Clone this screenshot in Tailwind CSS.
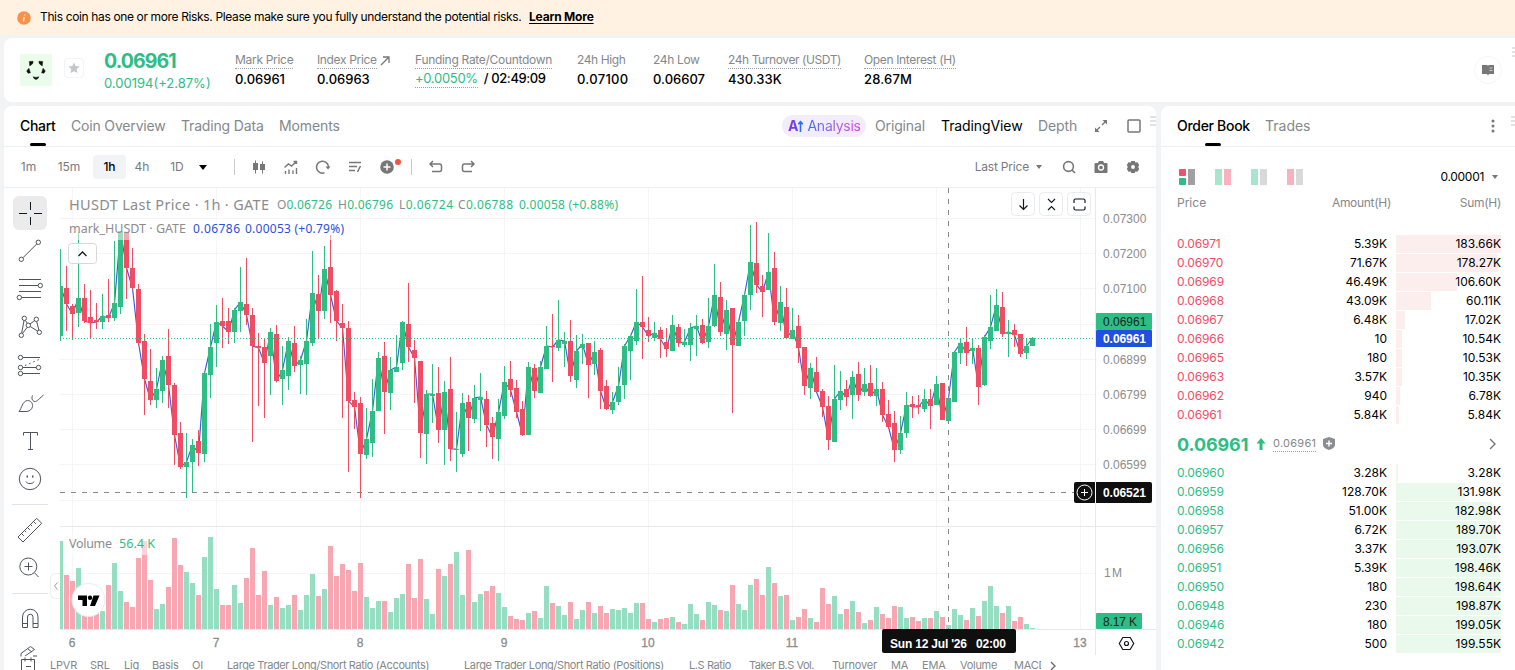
<!DOCTYPE html>
<html lang="en">
<head>
  <meta charset="UTF-8" />
  <meta name="viewport" content="width=device-width, initial-scale=1.0"/>
  <title>HUSDT 0.06961 - Futures</title>
  <script src="https://cdn.jsdelivr.net/npm/@tailwindcss/browser@4"></script>
</head>
<body class="w-[1515px] h-[670px] overflow-hidden bg-[#f2f3f5] font-['Inter','Liberation_Sans',sans-serif] text-black flex flex-col">

  <!-- Risk banner -->
  <div class="h-[35px] shrink-0 bg-[#fff2e2] flex items-center pl-[17px] text-xs">
    <svg class="w-[14px] h-[14px] mr-[9px]" viewBox="0 0 14 14"><circle cx="7" cy="7" r="6.8" fill="#fb9148"/><path d="M7.7 3.3v1.2M7.2 6l-.8 4.6" stroke="#ffe6d2" stroke-width="1.5" fill="none"/></svg>
    <span class="w-[489px] tracking-[-0.36px] whitespace-nowrap pb-px">This coin has one or more Risks. Please make sure you fully understand the potential risks.</span>
    <a class="font-bold underline underline-offset-2 tracking-[-0.2px] pb-px">Learn More</a>
  </div>

  <!-- Ticker header -->
  <header class="relative mt-[3px] ml-1 h-16 shrink-0 bg-white rounded-l-lg flex items-center pl-4">
    <div class="w-8 h-8 bg-[#e9fdea] flex items-center justify-center">
      <svg class="w-5 h-5" viewBox="0 0 20 20" fill="#111" stroke="#111" stroke-width=".5" stroke-linejoin="round"><path d="M3.300 1.500l3.800-.2-.3 2.200-3 2.500zM16.700 1.500l-3.800-.2.3 2.200 3 2.500zM.7 11l2.200-2.700 1.500 4.500-2.300.4zM19.300 11l-2.200-2.700-1.500 4.500 2.300.4zM7 16.800l3 .6 3-.6-1.300 1.900L10 19.500l-1.700-.8z"/></svg>
    </div>
    <div class="ml-3 w-5 h-5 -mt-1 border border-gray-100 rounded flex items-center justify-center">
      <svg class="w-3 h-3" viewBox="0 0 24 24" fill="#c4c7ca"><path d="M12 1l3.300 7.200 7.700.9-5.700 5.300 1.600 7.800L12 18.300l-6.900 3.900 1.600-7.800L1 9.100l7.700-.9z"/></svg>
    </div>
    <div class="ml-5 w-[131px] text-[#2ebd85] pt-0.5">
      <div class="text-[19.5px] leading-6 font-bold tracking-[-0.9px]">0.06961</div>
      <div class="text-[13px] leading-5 whitespace-nowrap">0.00194(+2.87%)</div>
    </div>
    <div class="flex text-xs text-[#84888c] whitespace-nowrap pt-px">
      <div class="w-[82px]">
        <span class="inline-block leading-4 border-b border-dotted border-gray-400 tracking-[-0.3px]">Mark Price</span>
        <div class="text-[13px] leading-5 text-black font-medium">0.06961</div>
      </div>
      <div class="w-[98px]">
        <span class="inline-block leading-4 border-b border-dotted border-gray-400 tracking-[-0.35px]">Index Price</span>
        <svg class="inline w-[10px] h-[10px]" viewBox="0 0 10 10" fill="none" stroke="#777" stroke-width="1.300"><path d="M1 9l8-8M3 1h6v6"/></svg>
        <div class="text-[13px] leading-5 text-black font-medium">0.06963</div>
      </div>
      <div class="w-[162px]">
        <span class="inline-block leading-4 border-b border-dotted border-gray-400 tracking-[-0.3px]">Funding Rate/Countdown</span>
        <div class="text-[13px] leading-[18px] text-black font-medium"><span class="inline-block border-b border-dotted border-gray-400 text-[#2ebd85] font-normal mr-1.5 tracking-[-0.3px]">+0.0050%</span><span class="tracking-[-0.4px]">/ 02:49:09</span></div>
      </div>
      <div class="w-[76px]">
        <span class="inline-block leading-4 border-b border-transparent tracking-[-0.4px]">24h High</span>
        <div class="text-[13px] leading-5 text-black font-medium tracking-[0.3px]">0.07100</div>
      </div>
      <div class="w-[75px]">
        <span class="inline-block leading-4 border-b border-transparent tracking-[-0.35px]">24h Low</span>
        <div class="text-[13px] leading-5 text-black font-medium">0.06607</div>
      </div>
      <div class="w-[136px]">
        <span class="inline-block leading-4 border-b border-dotted border-gray-400 tracking-[-0.42px]">24h Turnover (USDT)</span>
        <div class="text-[13px] leading-5 text-black font-medium">430.33K</div>
      </div>
      <div>
        <span class="inline-block leading-4 border-b border-dotted border-gray-400 tracking-[-0.35px]">Open Interest (H)</span>
        <div class="text-[13px] leading-5 text-black font-medium tracking-[0.2px]">28.67M</div>
      </div>
    </div>
    <div class="ml-auto mr-[13px] w-7 h-7 border border-[#f6f6f7] rounded-full flex items-center justify-center">
      <svg class="w-3 h-3" viewBox="0 0 12 12"><path d="M0 1h5l1 .7L7 1h5v9H7l-1 1.500L5 10H0z" fill="#777"/><path d="M7.500 4h3M7.500 6.500h3" stroke="#ddd" stroke-width=".8"/></svg>
    </div>
    <svg class="absolute right-0 top-[9px] w-[3px] h-[10px]" viewBox="0 0 3 10" stroke="#c4c6c9"><path d="M0 1h3M0 5h3M0 9h3"/></svg>
  </header>

  <div class="mt-1 grow min-h-0 flex">

    <!-- Chart panel -->
    <main class="relative ml-1 w-[1152px] shrink-0 bg-white rounded-t-lg overflow-hidden flex flex-col">
      <!-- Tabs -->
      <div class="h-[41px] shrink-0 border-b border-[#eeeff0] flex items-center text-sm text-[#84888c] whitespace-nowrap pl-4">
        <div class="relative w-[51px] h-full flex items-center text-black font-medium tracking-[-0.3px]">Chart<i class="absolute left-[10px] bottom-0 w-4 h-[3px] rounded-sm bg-black"></i></div>
        <div class="w-[110px] tracking-[-0.17px]">Coin Overview</div>
        <div class="w-[98px] tracking-[-0.17px]">Trading Data</div>
        <div class="tracking-[-0.1px]">Moments</div>
        <div class="ml-auto w-[84px] h-[22px] rounded-full bg-[#f1edfd] flex items-center pl-[6px]">
          <span class="font-bold bg-linear-to-r from-[#8e2be2] to-[#5a4cf0] bg-clip-text text-transparent">A</span>
          <svg class="w-[5px] h-3 mr-1" viewBox="0 0 5 12" fill="none" stroke="#2c6cf6" stroke-width="1.600"><path d="M2.500 12V3M.3 4.200l2.200-2.400 2.200 2.400"/></svg>
          <span class="bg-linear-to-r from-[#2c6cf6] to-[#e03ce0] bg-clip-text text-transparent tracking-[-0.25px]">Analysis</span>
        </div>
        <div class="ml-[9px] w-[66px] tracking-[-0.15px]">Original</div>
        <div class="w-[97px] text-black tracking-[-0.1px]">TradingView</div>
        <div class="w-[56px] tracking-[-0.1px]">Depth</div>
        <svg class="w-[14px] h-[14px]" viewBox="0 0 14 14" fill="#777" stroke="#777" stroke-width="1.400"><path d="M8 6l4-4M6 8l-4 4" fill="none"/><path stroke="none" d="M8.500 1H13v4.500zM5.500 13H1V8.500z"/></svg>
        <svg class="ml-[19px] mr-[15px] w-[14px] h-[14px]" viewBox="0 0 14 14" fill="none" stroke="#777" stroke-width="1.500"><rect x="1" y="1" width="12" height="12" rx="1"/></svg>
      </div>
      <svg class="absolute right-0 top-[10px] w-[6px] h-[10px]" viewBox="0 0 6 10" stroke="#c4c6c9"><path d="M0 1h6M0 5h6M0 9h6"/></svg>

      <!-- Toolbar -->
      <div class="h-[41px] shrink-0 border-b border-[#eeeff0] flex items-center text-xs text-[#777b80] whitespace-nowrap pl-1 text-center">
        <div class="w-[41px]">1m</div>
        <div class="w-10">15m</div>
        <div class="ml-1 w-[33px] h-6 leading-6 rounded bg-[#f2f3f4] text-black font-medium">1h</div>
        <div class="w-8">4h</div>
        <div class="w-[38px]">1D</div>
        <div class="w-[14px] flex justify-center"><svg class="w-2 h-[5px]" viewBox="0 0 8 5"><path d="M0 0h8L4 5z"/></svg></div>
        <div class="ml-6 w-px h-4 bg-[#c9cbce]"></div>
        <div class="ml-2 flex">
          <div class="w-8 flex justify-center"><svg class="w-4 h-4" viewBox="0 0 16 16" fill="#777" stroke="#777"><path d="M4.500 1.500v13M11.500 2.500v12"/><rect x="2.500" y="4.500" width="4" height="6"/><rect x="9.500" y="5.500" width="4" height="5"/></svg></div>
          <div class="w-8 flex justify-center"><svg class="w-4 h-4" viewBox="0 0 16 16" fill="none" stroke="#777" stroke-width="1.400"><path d="M1.500 8.500L5.500 5l3 2L13 3M10.500 2.500h3V5M2.500 12v3M6 10.500V15M10 11.500V15M13.500 9v6"/></svg></div>
          <div class="w-8 flex justify-center"><svg class="w-4 h-4" viewBox="0 0 16 16" fill="none" stroke="#777" stroke-width="1.500"><path d="M9.500 13.800A6 6 0 1 1 13.500 8"/><path d="M10.500 7.500h5L13 10.500z" fill="#777" stroke="none"/></svg></div>
          <div class="w-8 flex justify-center"><svg class="w-4 h-4" viewBox="0 0 16 16" fill="none" stroke="#777" stroke-width="1.500"><path d="M2 3.500h12M2 7.500h8M2 11.500h6M13.500 7l-3 6"/></svg></div>
          <div class="relative w-8 flex justify-center"><svg class="w-4 h-4" viewBox="0 0 16 16"><circle cx="8" cy="8" r="6.800" fill="#777"/><path d="M8 4.500v7M4.500 8h7" stroke="#fff" stroke-width="1.500"/></svg><i class="absolute right-0.5 top-0 w-[6px] h-[6px] rounded-full bg-[#f4533f]"></i></div>
        </div>
        <div class="ml-2 w-px h-4 bg-[#c9cbce]"></div>
        <div class="ml-2 flex">
          <div class="w-8 flex justify-center"><svg class="w-4 h-4" viewBox="0 0 16 16" fill="none" stroke="#777" stroke-width="1.500"><path d="M2 5h9.500a2 2 0 0 1 2 2v3.500a2 2 0 0 1-2 2H4M5 2L2 5l3 3"/></svg></div>
          <div class="w-8 flex justify-center"><svg class="w-4 h-4" viewBox="0 0 16 16" fill="none" stroke="#777" stroke-width="1.500"><path d="M14 5H4.500a2 2 0 0 0-2 2v3.500a2 2 0 0 0 2 2H12M11 2l3 3-3 3"/></svg></div>
        </div>
        <div class="ml-auto tracking-[-0.2px]">Last Price</div>
        <svg class="ml-[7px] w-[6px] h-1" viewBox="0 0 6 4" fill="#777"><path d="M0 0h6L3 4z"/></svg>
        <svg class="ml-5 w-[14px] h-[14px]" viewBox="0 0 14 14" fill="none" stroke="#777" stroke-width="1.600"><circle cx="6.500" cy="6.500" r="4.900"/><path d="M10 10l3 3"/></svg>
        <svg class="ml-[18px] w-[14px] h-[14px]" viewBox="0 0 14 14"><path d="M1.500 3h2.300L5 1h4l1.200 2h2.300q1 0 1 1v8q0 1-1 1h-11q-1 0-1-1V4q0-1 1-1z" fill="#777"/><circle cx="7" cy="7.500" r="2.500" fill="none" stroke="#fff" stroke-width="1.300"/></svg>
        <svg class="ml-[18px] mr-4 w-[14px] h-[14px]" viewBox="0 0 14 14"><path d="M5.300 1h3.400l.6 1.500 2.200-.3 1.700 2.900L12.200 7l1 1.900-1.700 2.900-2.200-.3L8.700 13H5.300l-.6-1.500-2.200.3L.8 8.900l1-1.900-1-1.900 1.700-2.900 2.200.3z" fill="#777"/><circle cx="7" cy="7" r="1.900" fill="#fff"/></svg>
      </div>

      <div class="h-[467px] shrink-0 flex">
        <!-- Drawing tools -->
        <div class="relative w-14 shrink-0 pt-[6px] pl-2">
          <div class="w-9 h-[38px] flex items-center justify-center">
            <div class="w-[34px] h-[34px] shrink-0 rounded-md bg-[#ebebeb] flex items-center justify-center">
              <svg class="w-7 h-7" viewBox="0 0 28 28" stroke="#131722"><path d="M14.500 3v8M14.500 18v8M3 14.500h8M18 14.500h8"/></svg>
            </div>
          </div>
          <div class="w-9 flex flex-col text-[#50535e]">
            <svg class="w-7 h-7 m-[5px] ml-1" viewBox="0 0 28 28" fill="none" stroke="currentColor"><circle cx="5.300" cy="22.300" r="2.200"/><circle cx="22.300" cy="5.300" r="2.200"/><path d="M7 20.700L20.700 7"/></svg>
            <svg class="w-7 h-7 m-[5px] ml-1" viewBox="0 0 28 28" fill="none" stroke="currentColor"><path d="M3 4.500h22M3 10.500h19M3 16.500h22M5.500 22.500H25"/><circle cx="24.300" cy="10.500" r="2.200"/><circle cx="3.300" cy="22.500" r="2.200"/></svg>
            <svg class="w-7 h-7 m-[5px] ml-1" viewBox="0 0 28 28" fill="none" stroke="currentColor"><circle cx="5.300" cy="22.300" r="2.200"/><circle cx="8.300" cy="5.300" r="2.200"/><circle cx="12.300" cy="12.300" r="2.200"/><circle cx="20.300" cy="6.300" r="2.200"/><circle cx="23.300" cy="19.300" r="2.200"/><path d="M5.700 20L8 7.500M9.200 7.300l2.200 3M6.500 20.500l4.700-6.200M14 11l4.700-3.500M20.700 8.500l2.200 8.700M14.200 13.500l7.300 4.500"/></svg>
            <svg class="w-7 h-7 m-[5px] ml-1" viewBox="0 0 28 28" fill="none" stroke="currentColor"><circle cx="4.500" cy="6.500" r="2.200"/><path d="M6.700 6.500H24"/><circle cx="4.500" cy="16.500" r="2.200"/><circle cx="22.500" cy="16.500" r="2.200"/><path d="M6.700 16.500h13.600"/><circle cx="4.500" cy="22.500" r="2.200"/><path d="M6.700 22.500H24"/><path stroke-dasharray="1.500 3" d="M9 14.500l14-6"/></svg>
            <svg class="w-7 h-7 m-[5px] ml-1" viewBox="0 0 28 28" fill="none" stroke="currentColor"><path d="M3 22.500C6 19 6 12.500 11.500 11.500c3.500 0 5.500 3 5 6-.7 3.500-3.500 5-6.500 5zM16.500 6.500c-1.500 3.500.5 6 2.500 6 1.500 0 2.500-1 8.500-6.500"/></svg>
            <svg class="w-7 h-7 m-[5px] ml-1" viewBox="0 0 28 28" fill="none" stroke="currentColor"><path d="M7.500 8.500v-3h14v3M14.500 5.500v17M12 22.500h5"/></svg>
            <svg class="w-7 h-7 m-[5px] ml-1" viewBox="0 0 28 28" fill="none" stroke="currentColor"><circle cx="14" cy="14" r="10.700"/><path d="M10 16.500c1 2.800 7 2.800 8 0"/><path stroke-width="2" d="M10.500 11.500h1.500M16 11.500h1.500"/></svg>
            <div class="h-[13px] pt-[6px]"><div class="h-px bg-[#e0e3eb]"></div></div>
            <svg class="w-7 h-7 m-[5px] ml-1" viewBox="0 0 28 28" fill="none" stroke="currentColor"><path d="M20.700 2.300l5 5L7 26l-5-5zM5.500 17.500l2.300 2.300M8.500 14.500l1.600 1.600M11.500 11.500l2.300 2.300M14.500 8.500l1.600 1.600M17.500 5.500l2.300 2.300"/></svg>
            <svg class="w-7 h-7 m-[5px] ml-1" viewBox="0 0 28 28" fill="none" stroke="currentColor"><circle cx="12.300" cy="12.500" r="8.500"/><path d="M18.500 18.700L22.500 23M8.500 12.500h8M12.500 8.500v8"/></svg>
            <div class="h-[13px] pt-[6px]"><div class="h-px bg-[#e0e3eb]"></div></div>
            <svg class="w-7 h-7 m-[5px] ml-1" viewBox="0 0 28 28" fill="none" stroke="currentColor"><path d="M6.500 22.500V12a7.700 7.700 0 0 1 15.500 0v10.500h-5V12a2.700 2.700 0 0 0-5.500 0v10.500zM6.500 18.500h5M17 18.500h5"/></svg>
            <svg class="w-7 h-7 m-[5px] ml-1 shrink-0" viewBox="0 0 28 28" fill="none" stroke="currentColor"><path d="M5 13.500v-3L14.500 3.500l4 3L9 13M12 6l4 3M17 13h4M5.500 28V16.500h13V28M9 14.500v4M15 14.500v4M10 23.500h5"/></svg>
          </div>
          <div class="absolute right-0 bottom-14 w-[10px] h-[26px] border border-r-0 border-[#eceef0] rounded-l-md bg-white flex items-center justify-center">
            <svg class="w-1 h-2" viewBox="0 0 4 8" fill="none" stroke="#9a9da3"><path d="M3.500.5L.5 4l3 3.500"/></svg>
          </div>
        </div>

        <!-- Price and volume chart -->
        <svg id="chart" class="w-[1096px] h-[467px] shrink-0" viewBox="60 188 1096 467">
          <g id="grid" stroke="#f5f5f6"></g>
          <g id="volume"></g>
          <polyline id="mark" fill="none" stroke="#3f5fe0" stroke-width="1.200"></polyline>
          <g id="candles"></g>
          <path d="M60 338.500H1096" stroke="#2ebd85" stroke-dasharray="1 2"/>
          <path d="M60 526.500H1156M60 629.500H1156M1095.500 188V655" stroke="#e6e8ea"/>
          <path d="M60 492.500H1074" stroke="#888" stroke-dasharray="5 6"/>
          <path d="M948.500 188V629" stroke="#888" stroke-dasharray="5 6"/>

          <!-- Legend -->
          <rect x="66" y="220" width="282" height="20" fill="#fff" fill-opacity=".5"/>
          <rect x="66" y="534" width="92" height="21" fill="#fff" fill-opacity=".5"/>
          <g class="font-['Noto_Sans',sans-serif]" fill="#8c8c8c">
            <text x="69" y="210" font-size="14.500" textLength="200">HUSDT Last Price · 1h · GATE</text>
            <g font-size="12" fill="#2ebd85">
              <text x="277" y="209" textLength="55"><tspan fill="#8c8c8c">O</tspan>0.06726</text>
              <text x="338" y="209" textLength="55"><tspan fill="#8c8c8c">H</tspan>0.06796</text>
              <text x="399" y="209" textLength="54"><tspan fill="#8c8c8c">L</tspan>0.06724</text>
              <text x="458" y="209" textLength="55"><tspan fill="#8c8c8c">C</tspan>0.06788</text>
              <text x="519" y="209" textLength="99">0.00058 (+0.88%)</text>
            </g>
            <text x="69" y="233" font-size="12.500" textLength="117">mark_HUSDT · GATE</text>
            <text x="193" y="233" font-size="12" fill="#2c50d8" textLength="47">0.06786</text>
            <text x="245" y="233" font-size="12" fill="#2c50d8" textLength="99">0.00053 (+0.79%)</text>
            <text x="69" y="548" font-size="12.500" textLength="43">Volume</text>
            <text x="119" y="548" font-size="12.500" fill="#2ebd85" textLength="36">56.4 K</text>
          </g>
          <rect x="68.500" y="243.500" width="28" height="20" rx="3" fill="#fff" fill-opacity=".85" stroke="#d6d8dc"/>
          <path d="M78.500 256l4-4 4 4" fill="none" stroke="#131722" stroke-width="1.300"/>

          <!-- Pane buttons -->
          <g fill="#fff" stroke="#eaebee"><rect x="1011.500" y="192.500" width="23" height="23" rx="4"/><rect x="1039.500" y="192.500" width="23" height="23" rx="4"/><rect x="1067.500" y="192.500" width="23" height="23" rx="4"/></g>
          <g fill="none" stroke="#131722" stroke-width="1.200"><path d="M1023.500 199v10.500M1019.500 205.500l4 4 4-4"/><path stroke-width="1.100" d="M1048 199l3.500 3.500 3.500-3.500M1048 210l3.500-3.500 3.500 3.500"/><path d="M1074 203v-2.500q0-1.500 1.500-1.500h8q1.500 0 1.500 1.500v2.500M1074 206.500v2q0 1.500 1.500 1.500h8q1.500 0 1.500-1.500v-2"/></g>

          <!-- Logo -->
          <circle cx="88.500" cy="600" r="16.500" fill="#fff" stroke="#ececee"/>
          <path d="M78 595.500h9v10.500h-4.500v-6H78zM93.500 595.500h6L95 606h-5z" fill="#000"/><circle cx="90" cy="597.700" r="2.200"/>

          <!-- Axis labels -->
          <g id="prices" class="font-['Liberation_Sans',sans-serif]" font-size="12" fill="#8c8c8c"></g>
          <g class="font-['Liberation_Sans',sans-serif]" font-size="12">
            <rect x="1096" y="313" width="56" height="17" rx="1" fill="#2ebd85"/><text x="1103" y="326" fill="#10281f">0.06961</text>
            <rect x="1096" y="330" width="56" height="17" rx="1" fill="#2150e0"/><text x="1103" y="343" fill="#fff" font-weight="bold" textLength="43">0.06961</text>
            <rect x="1074" y="482" width="78" height="21" rx="2" fill="#0f0f0f"/><path d="M1095.500 482v21" stroke="#fff"/>
            <circle cx="1084.500" cy="492.500" r="7.500" fill="none" stroke="#fff"/><path d="M1084.500 489v7M1081 492.500h7" stroke="#fff"/>
            <text x="1103" y="497" fill="#fff" font-weight="bold" textLength="43">0.06521</text>
            <rect x="1096" y="613" width="46" height="16" rx="1" fill="#2ebd85"/><text x="1103" y="626" fill="#10281f" textLength="34">8.17 K</text>
            <text x="1104" y="577" fill="#8c8c8c" textLength="18">1 M</text>
            <rect x="882" y="629" width="134" height="24" rx="2" fill="#0f0f0f"/>
            <text x="890" y="648" fill="#fff" font-weight="bold" textLength="77">Sun 12 Jul '26</text><text x="976" y="648" fill="#fff" font-weight="bold" textLength="30">02:00</text>
          </g>
          <g fill="none" stroke="#131722" stroke-width="1.200"><path d="M1122.800 637.500h7.400l3.500 6-3.500 6h-7.400l-3.500-6z"/><circle cx="1126.500" cy="643.500" r="2"/></g>
        </svg>
      </div>

      <!-- Indicator shortcuts -->
      <div class="h-[21px] shrink-0 pl-[46px] flex items-center text-[11px] text-[#84888c] tracking-[-0.2px] whitespace-nowrap">
        <span class="w-10">LPVR</span><span class="w-[34px]">SRL</span><span class="w-[28px]">Liq</span><span class="w-10">Basis</span><span class="w-[35px]">OI</span>
        <span class="w-[237px] tracking-[-0.38px]">Large Trader Long/Short Ratio (Accounts)</span><span class="w-[225px] tracking-[-0.38px]">Large Trader Long/Short Ratio (Positions)</span>
        <span class="w-[60px] tracking-[-0.4px]">L.S Ratio</span><span class="w-[83px] tracking-[-0.5px]">Taker B.S Vol.</span><span class="w-[59px]">Turnover</span><span class="w-[31px]">MA</span><span class="w-[38px]">EMA</span><span class="w-[54px] tracking-[-0.3px]">Volume</span><span class="w-[27px] overflow-hidden">MACD</span>
        <svg class="ml-[9px] w-[6px] h-[10px]" viewBox="0 0 6 10" fill="none" stroke="#666" stroke-width="1.300"><path d="M1 1l4 4-4 4"/></svg>
      </div>
    </main>

    <!-- Order book -->
    <aside class="relative ml-[5px] grow bg-white rounded-tl-lg text-xs pr-[14px] flex flex-col">
      <div class="-mr-[14px] h-[41px] shrink-0 border-b border-[#eeeff0] pl-4 pr-5 flex items-center text-sm">
        <div class="relative w-[88px] h-full flex items-center font-medium tracking-[-0.3px] whitespace-nowrap">Order Book<i class="absolute left-7 bottom-0 w-4 h-[3px] rounded-sm bg-black"></i></div>
        <div class="text-[#84888c]">Trades</div>
        <svg class="ml-auto w-1 h-[14px]" viewBox="0 0 4 14" fill="#777"><circle cx="2" cy="2" r="1.500"/><circle cx="2" cy="7" r="1.500"/><circle cx="2" cy="12" r="1.500"/></svg>
      </div>
      <svg class="absolute right-0 top-[10px] w-1 h-[10px]" viewBox="0 0 4 10" stroke="#c4c6c9"><path d="M0 1h4M0 5h4M0 9h4"/></svg>

      <div class="mt-[21px] pl-[18px] h-[18px] flex items-center gap-5">
        <svg class="w-4 h-4" viewBox="0 0 16 16"><rect width="7" height="7" rx="1" fill="#f0506a"/><rect y="9" width="7" height="7" rx="1" fill="#2ebd85"/><rect x="9" width="7" height="16" fill="#a0a0a0"/></svg>
        <svg class="w-4 h-4" viewBox="0 0 16 16"><rect width="7" height="16" fill="#a9e4cc"/><rect x="9" width="7" height="16" fill="#f9b0bf"/></svg>
        <svg class="w-4 h-4" viewBox="0 0 16 16"><rect width="7" height="16" fill="#a9e4cc"/><rect x="9" width="7" height="16" fill="#d9d9d9"/></svg>
        <svg class="w-4 h-4" viewBox="0 0 16 16"><rect width="7" height="16" fill="#f9b0bf"/><rect x="9" width="7" height="16" fill="#d9d9d9"/></svg>
        <span class="ml-auto flex items-center gap-2 pr-[3px]"><span class="tracking-[-0.3px]">0.00001</span><svg class="w-[6px] h-1" viewBox="0 0 6 4" fill="#777"><path d="M0 0h6L3 4z"/></svg></span>
      </div>
      <div class="mt-2 pl-4 flex h-[18px] items-center text-[#84888c] tracking-[-0.3px]">
        <span class="tracking-normal">Price</span><span class="ml-auto">Amount(H)</span><span class="w-[110px] text-right">Sum(H)</span>
      </div>
      <div id="asks" class="mt-[22px] shrink-0"></div>
      <div class="pl-4 h-[39px] shrink-0 flex items-center">
        <span class="text-lg font-bold tracking-[-0.1px] text-[#2ebd85] w-[79px] pt-0.5">0.06961</span>
        <svg class="w-[10px] h-3" viewBox="0 0 10 12" fill="#2ebd85"><path d="M5 0l4.500 5.500h-3V12h-3V5.500h-3z"/></svg>
        <span class="ml-[7px] text-[11px] leading-4 tracking-[0.25px] text-[#84888c] border-b border-dotted border-gray-400">0.06961</span>
        <svg class="ml-[7px] w-3 h-[13px]" viewBox="0 0 12 13"><path d="M6 0l6 2v6q0 3-6 5-6-2-6-5V2z" fill="#8a8d91"/><path d="M6 3.500v6M3 6.500h6" stroke="#fff" stroke-width="1.500"/></svg>
        <svg class="ml-auto mr-[5px] w-[7px] h-3" viewBox="0 0 7 12" fill="none" stroke="#777" stroke-width="1.400"><path d="M1 1l5 5-5 5"/></svg>
      </div>
      <div id="bids" class="shrink-0"></div>
    </aside>
  </div>

  <script>
    // Each candle: side, high, body top, body bottom, low, volume height
    const candles = `g249,286,336,341,88 r266,288,304,331,54 r304,306,314,340,48 g232,298,313,327,61 r284,298,321,323,30 r290,317,323,338,28
      r303,320,322,329,30 g294,316,322,329,18 r279,315,318,322,44 g241,303,318,321,66 g231,231,307,314,38 r232,232,268,299,27
      r248,268,288,290,22 r284,289,343,345,71 r334,341,379,415,88 r349,381,400,405,49 g368,389,400,408,20 g356,360,391,403,25
      r329,356,385,408,42 r383,385,435,465,91 r422,433,467,469,64 g433,462,467,498,57 g439,445,462,493,46 r430,441,453,466,34
      g371,373,454,462,72 g324,347,375,398,92 g305,322,343,367,40 r298,321,326,348,24 r308,321,332,344,24 g308,310,332,343,44
      g267,302,311,332,26 r258,304,315,325,51 r308,315,346,442,81 r333,346,348,406,34 r339,347,363,418,58 g328,332,356,395,24
      r325,334,381,382,32 g346,370,379,405,21 g337,341,376,390,24 r326,343,366,372,34 g356,360,365,394,19 g319,341,364,395,34
      g251,293,343,346,55 r275,294,311,338,33 g246,269,311,319,40 r235,267,295,323,83 r290,291,321,341,53 r304,323,328,418,65
      r321,328,401,472,59 r392,400,407,429,38 r397,403,454,498,66 g408,439,455,459,32 g379,411,443,457,21 g352,358,411,411,28
      r342,356,392,434,28 g357,370,393,410,17 g335,367,372,372,31 g321,322,363,370,35 r283,324,347,362,65 r340,350,358,403,31
      r361,361,433,458,70 g390,394,434,464,30 g364,394,396,423,15 r367,393,430,443,60 g381,392,430,465,53 r357,389,449,461,65
      g412,449,450,472,77 g393,403,454,457,34 r395,402,418,451,79 g385,398,419,423,27 g373,397,400,431,35 r391,399,425,447,38
      r417,423,437,459,43 g399,412,439,461,36 g366,382,416,419,22 r361,379,390,397,13 r380,388,412,418,10 r401,409,435,436,9
      g362,367,435,435,16 r364,368,391,398,18 g361,367,393,393,11 g326,346,369,369,43 r314,346,347,382,26 g300,340,348,351,23
      g332,341,344,367,14 r320,341,376,382,27 g335,351,380,388,10 g334,344,348,364,19 r343,343,365,398,27 g341,352,364,375,16
      r348,350,391,409,23 r380,386,409,410,16 g392,402,410,414,20 g367,386,402,405,19 g344,346,385,399,21 g335,336,351,380,16
      g289,322,341,345,26 r276,322,327,359,26 r317,330,336,342,10 g322,333,338,341,7 r327,330,339,358,10 r328,342,349,357,11
      g315,325,351,351,12 r324,327,343,347,7 g329,342,345,347,5 g323,328,345,361,25 g315,326,329,356,15 r319,325,343,343,9
      g298,326,342,348,27 g264,295,326,327,24 r282,297,332,336,19 g300,310,334,350,18 r308,308,345,413,44 g320,322,346,346,25
      g293,295,321,336,19 g225,262,295,310,44 r222,263,285,293,50 r275,286,292,317,34 g233,272,290,290,62 r252,268,322,325,46
      g286,302,323,331,33 r288,307,338,338,34 g308,330,339,339,9 r315,326,348,363,12 r347,347,386,395,20 g363,368,388,399,11
      r357,372,392,392,7 r389,391,407,417,41 r396,406,440,450,25 g365,399,442,442,33 g371,391,400,410,15 r380,389,397,406,20
      g371,377,395,419,28 r362,374,395,401,17 g368,384,392,396,6 r365,383,396,396,9 g368,389,396,406,22 r382,389,415,422,15
      r400,414,427,429,11 r411,423,450,462,23 g416,433,450,454,22 g392,405,433,438,11 r396,404,407,418,12 r395,405,407,414,8
      g389,399,409,412,11 r389,399,406,429,11 g376,384,405,405,18 r383,383,420,420,12 g398,398,421,423,4 g352,352,402,402,20
      g339,343,353,364,14 r327,342,353,366,9 g339,348,351,364,21 r345,348,387,405,13 g335,337,385,386,28 g295,327,341,349,43
      g289,305,331,331,23 r292,307,334,337,16 g320,332,334,357,23 r324,330,335,347,8 r334,334,354,357,12 g339,346,353,359,5
      g337,338,346,346,1`.split(/\s+/);

    let bodies = "", bars = "", line = "";
    candles.forEach((c, i) => {
      const up = c[0] === "g";
      const [high, top, bottom, low, vol] = c.slice(1).split(",").map(Number);
      const x = 60.5 + i * 6;
      const left = Math.max(x - 2.5, 60);
      const width = x + 2.5 - left;
      const color = up ? "#2ebd85" : "#f04d64";
      bodies += `<path d="M${x} ${high}V${low}" stroke="${color}"/><rect x="${left}" y="${top}" width="${width}" height="${bottom - top}" fill="${color}"/>`;
      bars += `<rect x="${left}" y="${629 - vol}" width="${width}" height="${vol}" fill="${up ? "#96dec2" : "#f7a6b2"}"/>`;
      line += `${x},${up ? top : bottom} `;
    });
    document.getElementById("candles").innerHTML = bodies;
    document.getElementById("volume").innerHTML = bars;
    document.getElementById("mark").setAttribute("points", line);

    // Grid lines and axis labels
    let grid = "", labels = "";
    ["0.07300", "0.07200", "0.07100", "", "0.06899", "0.06799", "0.06699", "0.06599", ""].forEach((p, i) => {
      const y = Math.round(218 + i * 35.2) + 0.5;
      grid += `<path d="M60 ${y}H1095"/>`;
      labels += `<text x="1103" y="${y + 4}">${p}</text>`;
    });
    grid += `<path d="M60 573.5H1095"/>`;
    ["6", "7", "8", "9", "10", "11", "", "13"].forEach((d, i) => {
      const x = 72.5 + i * 144;
      grid += `<path d="M${x} 188V629"/>`;
      labels += `<text x="${x - 0.5}" y="647" text-anchor="middle" stroke="#8c8c8c" stroke-width=".3">${d}</text>`;
    });
    document.getElementById("grid").innerHTML = grid;
    document.getElementById("prices").innerHTML = labels;

    // Order book rows: price, amount, sum, depth bar width
    const asks = [
      ["0.06971", "5.39K", "183.66K", 105], ["0.06970", "71.67K", "178.27K", 102], ["0.06969", "46.49K", "106.60K", 61],
      ["0.06968", "43.09K", "60.11K", 35], ["0.06967", "6.48K", "17.02K", 9], ["0.06966", "10", "10.54K", 6],
      ["0.06965", "180", "10.53K", 6], ["0.06963", "3.57K", "10.35K", 6], ["0.06962", "940", "6.78K", 4], ["0.06961", "5.84K", "5.84K", 3]
    ];
    const bids = [
      ["0.06960", "3.28K", "3.28K", 2], ["0.06959", "128.70K", "131.98K", 69], ["0.06958", "51.00K", "182.98K", 96],
      ["0.06957", "6.72K", "189.70K", 100], ["0.06956", "3.37K", "193.07K", 102], ["0.06951", "5.39K", "198.46K", 104],
      ["0.06950", "180", "198.64K", 105], ["0.06948", "230", "198.87K", 105], ["0.06946", "180", "199.05K", 105], ["0.06942", "500", "199.55K", 105]
    ];
    function renderRows(id, rows, text, bar) {
      document.getElementById(id).innerHTML = rows.map(([price, amount, sum, depth]) => `
        <div class="h-[19px] pl-4 flex items-center">
          <span class="pt-px tracking-[-0.1px] ${text}">${price}</span>
          <span class="pt-px ml-auto">${amount}</span>
          <span class="relative ml-[9px] w-[105px] h-[18px] leading-[17px] text-right"><i class="absolute left-0 top-0 h-[18px] ${bar}" style="width:${depth}px"></i><span class="relative">${sum}</span></span>
        </div>`).join("");
    }
    renderRows("asks", asks, "text-[#f04d64]", "bg-[#fdeeee]");
    renderRows("bids", bids, "text-[#2ebd85]", "bg-[#e9f9ec]");
  </script>
</body>
</html>
